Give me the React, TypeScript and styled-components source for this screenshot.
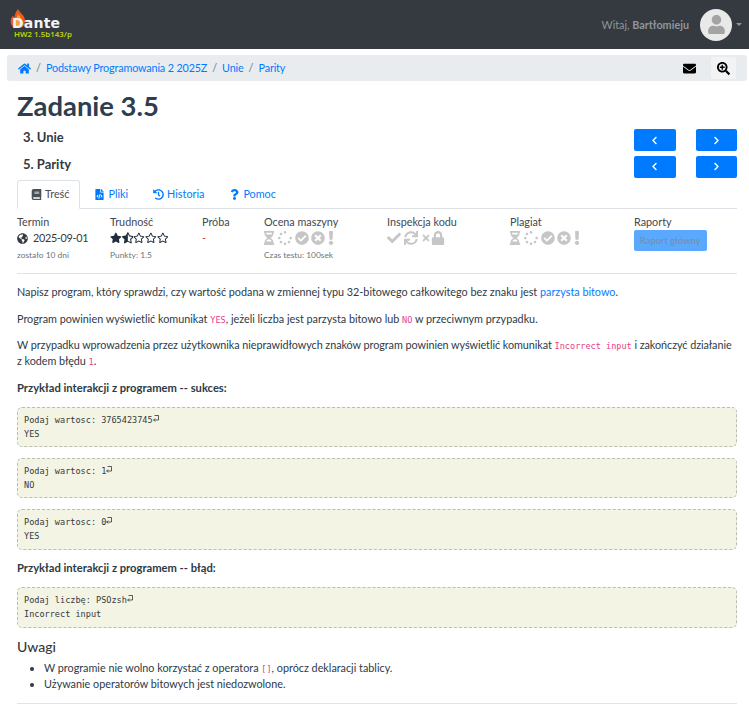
import React from "react";
import styled, { createGlobalStyle } from "styled-components";
import {
  FaBook, FaCheck, FaCheckCircle, FaChevronLeft, FaChevronRight, FaEnvelope, FaExclamation,
  FaFileCode, FaGlobeAmericas, FaHistory, FaHome, FaHourglassHalf, FaLock, FaQuestion,
  FaRegStar, FaSearchPlus, FaSpinner, FaStar, FaStarHalfAlt, FaSync, FaTimes, FaTimesCircle, FaUser,
} from "react-icons/fa";

const Global = createGlobalStyle`
  * { box-sizing: border-box; }
  html, body { margin: 0; padding: 0; background: #fff; overflow: hidden; }
  body {
    font-family: Lato, "Noto Sans", sans-serif;
    font-size: 10.8px;
    line-height: 16px;
    color: #2c3a47;
  }
`;

const Navbar = styled.header`
  height: 49px;
  background: #343a40;
  display: flex;
  align-items: center;
  justify-content: space-between;
  padding: 0 7px 0 10px;
`;

const Brand = styled.div`
  position: relative;
  width: 70px;
  height: 30px;
  padding: 7px 0 0 2px;
`;

const Flame = styled.svg`
  position: absolute;
  left: 0;
  top: -1px;
`;

const BrandName = styled.div`
  position: relative;
  font-family: "DejaVu Sans", sans-serif;
  font-weight: 700;
  font-size: 14px;
  line-height: 13px;
  letter-spacing: 0.2px;
  color: #f4f4f4;
`;

const BrandVersion = styled.div`
  font-family: "Noto Sans", sans-serif;
  font-size: 7.9px;
  line-height: 10px;
  font-weight: 600;
  color: #b8d40c;
  margin: -1px 0 0 2px;
  white-space: nowrap;
`;

const UserBox = styled.div`
  display: flex;
  align-items: center;
`;

const Greeting = styled.span`
  color: #8f959b;
  margin-right: 11px;
  b { font-weight: 700; }
`;

const Avatar = styled.div`
  width: 32px;
  height: 32px;
  border-radius: 50%;
  background: #e9e9e9;
  color: #a3a3a3;
  display: flex;
  align-items: center;
  justify-content: center;
`;

const Caret = styled.span`
  margin-left: 4px;
  width: 0;
  height: 0;
  border-left: 3px solid transparent;
  border-right: 3px solid transparent;
  border-top: 3px solid #8f959b;
`;

const Crumbs = styled.nav`
  height: 26px;
  margin: 6px 2px 0 7px;
  background: #e9ecef;
  border-radius: 3px;
  display: flex;
  align-items: center;
  padding: 0 11px 0 11px;
`;

const CrumbLink = styled.a`
  color: #007bff;
  display: flex;
  align-items: center;
  letter-spacing: -0.15px;
`;

const CrumbSep = styled.span`
  color: #6c757d;
  margin: 0 5px;
`;

const CrumbTools = styled.div`
  margin-left: auto;
  display: flex;
  align-items: center;
  gap: 15px;
  color: #000;
`;

const ToolButton = styled.span`
  width: 25px;
  height: 22px;
  background: #f2f3f4;
  border-radius: 2px;
  display: flex;
  align-items: center;
  justify-content: center;
`;

const Main = styled.main`
  padding: 0 12px 0 17px;
`;

const Title = styled.h1`
  margin: 8px 0 2px;
  font-size: 27.4px;
  line-height: 34px;
  padding-bottom: 2px;
  font-weight: 700;
  color: #2c3e50;
`;

const NavRow = styled.div`
  display: flex;
  align-items: center;
  justify-content: space-between;
  height: 26.5px;
  padding: 0 0 0 6px;
`;

const NavTitle = styled.span`
  font-size: 13px;
  font-weight: 700;
  color: #343a40;
  padding-bottom: 6px;
`;

const NavButtons = styled.div`
  display: flex;
  gap: 20px;
`;

const NavButton = styled.span`
  width: 41.5px;
  height: 22px;
  background: #007bff;
  border-radius: 2px;
  color: #fff;
  display: flex;
  align-items: center;
  justify-content: center;
`;

const Tabs = styled.div`
  display: flex;
  height: 29px;
  border-bottom: 1px solid #dee2e6;
`;

const Tab = styled.a<{ $active?: boolean }>`
  display: flex;
  align-items: center;
  gap: 3px;
  height: 29px;
  padding: 0 10px 1px 13px;
  border: 1px solid ${(p) => (p.$active ? "#dee2e6" : "transparent")};
  border-bottom-color: ${(p) => (p.$active ? "#fff" : "transparent")};
  border-radius: 3px 3px 0 0;
  color: ${(p) => (p.$active ? "#495057" : "#007bff")};
`;

const Stats = styled.section`
  display: grid;
  grid-template-columns: 93px 92px 62px 123px 123px 124px 1fr;
  height: 65px;
  padding-top: 5px;
  border-bottom: 1px solid #e3e3e3;
`;

const StatLabel = styled.div`
  color: #3f4850;
  height: 16px;
`;

const StatValue = styled.div<{ $danger?: boolean }>`
  height: 16px;
  display: flex;
  align-items: center;
  gap: 5px;
  letter-spacing: -0.3px;
  color: ${(p) => (p.$danger ? "#dc3545" : "#343a40")};
`;

const Stars = styled.div`
  display: flex;
  color: #1f2d3d;
  height: 16px;
  align-items: center;
`;

const MachineStatus = styled.div`
  display: flex;
  align-items: center;
  gap: 2.5px;
  height: 16px;
  margin-left: -2.500px;
  color: #c6c6c6;
  svg:last-child { margin-left: -3.500px; }
`;

const InspectStatus = styled.div`
  display: flex;
  align-items: center;
  gap: 3px;
  height: 16px;
  color: #c6c6c6;
  svg:nth-child(3) { margin-right: -3px; }
`;

const StatNote = styled.div`
  font-size: 8.4px;
  line-height: 13px;
  margin-top: 3px;
  color: #6c757d;
`;

const ReportButton = styled.span`
  display: inline-block;
  background: #5aa9ff;
  color: #7e8c9c;
  border-radius: 2px;
  font-size: 9.4px;
  line-height: 21px;
  padding: 0 6px;
`;

const Body = styled.article`
  padding-top: 10px;
`;

const Para = styled.p`
  margin: 0 0 10.7px;
`;

const TightPara = styled(Para)`
  letter-spacing: -0.05px;
`;

const Strong = styled.p`
  margin: 0 0 10.7px;
  font-size: 11.2px;
  font-weight: 700;
  color: #2c3a47;
`;

const Link = styled.a`
  color: #007bff;
`;

const Code = styled.code`
  font-family: "DejaVu Sans Mono", monospace;
  font-size: 8.55px;
  line-height: 1;
  letter-spacing: 0;
  color: #e83e8c;
`;

const Sample = styled.pre`
  margin: 0 0 10.7px;
  height: 40.5px;
  padding: 5px 6px;
  background: #f3f4e4;
  border: 1px dashed #bdbdb3;
  border-radius: 5px;
  font-family: "DejaVu Sans Mono", monospace;
  font-size: 8.55px;
  line-height: 14px;
  color: #343a40;
`;

const ReturnMark = styled.svg`
  width: 6px;
  height: 7px;
  vertical-align: 1px;
`;

const SubHeading = styled.h4`
  margin: 0 0 3.7px;
  font-size: 14px;
  line-height: 18px;
  font-weight: 500;
  color: #343a40;
`;

const Notes = styled.ul`
  margin: 0;
  padding: 0 0 0 27px;
`;

const Divider = styled.hr`
  border: 0;
  border-top: 1px solid #e3e3e3;
  margin: 11px 0 0;
`;

const machine = (
  <MachineStatus>
    <FaHourglassHalf size={14} />
    <FaSpinner size={14} />
    <FaCheckCircle size={14} />
    <FaTimesCircle size={14} />
    <FaExclamation size={14} />
  </MachineStatus>
);

const samples = [
  ["Podaj wartosc: 3765423745", "YES"],
  ["Podaj wartosc: 1", "NO"],
  ["Podaj wartosc: 0", "YES"],
  ["Podaj liczbę: PSOzsh", "Incorrect input"],
];

const renderSample = ([input, output]: string[]) => (
  <Sample key={input}>
    {input}
    <ReturnMark viewBox="0 0 6 7">
      <path d="M1.500 .5h4v4.500H.5M2.200 3.500.7 5l1.500 1.500" fill="none" stroke="#333" strokeWidth="0.8" />
    </ReturnMark>
    {"\n"}{output}
  </Sample>
);

export default function App() {
  return (
    <>
      <Global />
      <Navbar>
        <Brand>
          <Flame width="16" height="20" viewBox="0 0 16 20">
            <path d="M8 0c1 3 5 5 6.500 9 1 3 .5 7-2.500 9.500H4C1 17 0 13 1 10c.5-1.500 1.500-2.500 2-3.500.3 1 .8 1.500 1.500 2C4.500 5.500 6 2.500 8 0z" fill="#ef5a1c" />
            <path d="M8 5c1 2 4 4 4 8 0 2-1 4-3 5H5C3.500 17 3 14.500 3.500 12.500 5 11 7.500 8 8 5z" fill="#f8a03a" />
          </Flame>
          <BrandName>Dante</BrandName>
          <BrandVersion>HW2 1.5b143/p</BrandVersion>
        </Brand>
        <UserBox>
          <Greeting>Witaj, <b>Bartłomieju</b></Greeting>
          <Avatar><FaUser size={19} /></Avatar>
          <Caret />
        </UserBox>
      </Navbar>

      <Crumbs>
        <CrumbLink><FaHome size={13} /></CrumbLink>
        <CrumbSep>/</CrumbSep>
        <CrumbLink>Podstawy Programowania 2 2025Z</CrumbLink>
        <CrumbSep>/</CrumbSep>
        <CrumbLink>Unie</CrumbLink>
        <CrumbSep>/</CrumbSep>
        <CrumbLink>Parity</CrumbLink>
        <CrumbTools>
          <FaEnvelope size={13} />
          <ToolButton><FaSearchPlus size={13} /></ToolButton>
        </CrumbTools>
      </Crumbs>

      <Main>
        <Title>Zadanie 3.5</Title>
        <NavRow>
          <NavTitle>3. Unie</NavTitle>
          <NavButtons>
            <NavButton><FaChevronLeft size={9} /></NavButton>
            <NavButton><FaChevronRight size={9} /></NavButton>
          </NavButtons>
        </NavRow>
        <NavRow>
          <NavTitle>5. Parity</NavTitle>
          <NavButtons>
            <NavButton><FaChevronLeft size={9} /></NavButton>
            <NavButton><FaChevronRight size={9} /></NavButton>
          </NavButtons>
        </NavRow>

        <Tabs>
          <Tab $active><FaBook size={11} /> Treść</Tab>
          <Tab><FaFileCode size={11} /> Pliki</Tab>
          <Tab><FaHistory size={11} /> Historia</Tab>
          <Tab><FaQuestion size={11} /> Pomoc</Tab>
        </Tabs>

        <Stats>
          <div>
            <StatLabel>Termin</StatLabel>
            <StatValue><FaGlobeAmericas size={11} /> 2025-09-01</StatValue>
            <StatNote>zostało 10 dni</StatNote>
          </div>
          <div>
            <StatLabel>Trudność</StatLabel>
            <Stars>
              <FaStar size={11.7} />
              <FaStarHalfAlt size={11.7} />
              <FaRegStar size={11.7} />
              <FaRegStar size={11.7} />
              <FaRegStar size={11.7} />
            </Stars>
            <StatNote>Punkty: 1.5</StatNote>
          </div>
          <div>
            <StatLabel>Próba</StatLabel>
            <StatValue $danger>-</StatValue>
          </div>
          <div>
            <StatLabel>Ocena maszyny</StatLabel>
            {machine}
            <StatNote>Czas testu: 100sek</StatNote>
          </div>
          <div>
            <StatLabel>Inspekcja kodu</StatLabel>
            <InspectStatus>
              <FaCheck size={14} />
              <FaSync size={14} />
              <FaTimes size={10} />
              <FaLock size={14} />
            </InspectStatus>
          </div>
          <div>
            <StatLabel>Plagiat</StatLabel>
            {machine}
          </div>
          <div>
            <StatLabel>Raporty</StatLabel>
            <ReportButton>Raport główny</ReportButton>
          </div>
        </Stats>

        <Body>
          <Para>
            Napisz program, który sprawdzi, czy wartość podana w zmiennej typu 32-bitowego całkowitego bez znaku jest{" "}
            <Link>parzysta bitowo</Link>.
          </Para>
          <Para>
            Program powinien wyświetlić komunikat <Code>YES</Code>, jeżeli liczba jest parzysta bitowo lub <Code>NO</Code> w przeciwnym przypadku.
          </Para>
          <TightPara>
            W przypadku wprowadzenia przez użytkownika nieprawidłowych znaków program powinien wyświetlić komunikat{" "}
            <Code>Incorrect input</Code> i zakończyć działanie z kodem błędu <Code>1</Code>.
          </TightPara>
          <Strong>Przykład interakcji z programem -- sukces:</Strong>
          {samples.slice(0, 3).map(renderSample)}
          <Strong>Przykład interakcji z programem -- błąd:</Strong>
          {samples.slice(3).map(renderSample)}
          <SubHeading>Uwagi</SubHeading>
          <Notes>
            <li>W programie nie wolno korzystać z operatora <Code>[]</Code>, oprócz deklaracji tablicy.</li>
            <li>Używanie operatorów bitowych jest niedozwolone.</li>
          </Notes>
          <Divider />
        </Body>
      </Main>
    </>
  );
}
